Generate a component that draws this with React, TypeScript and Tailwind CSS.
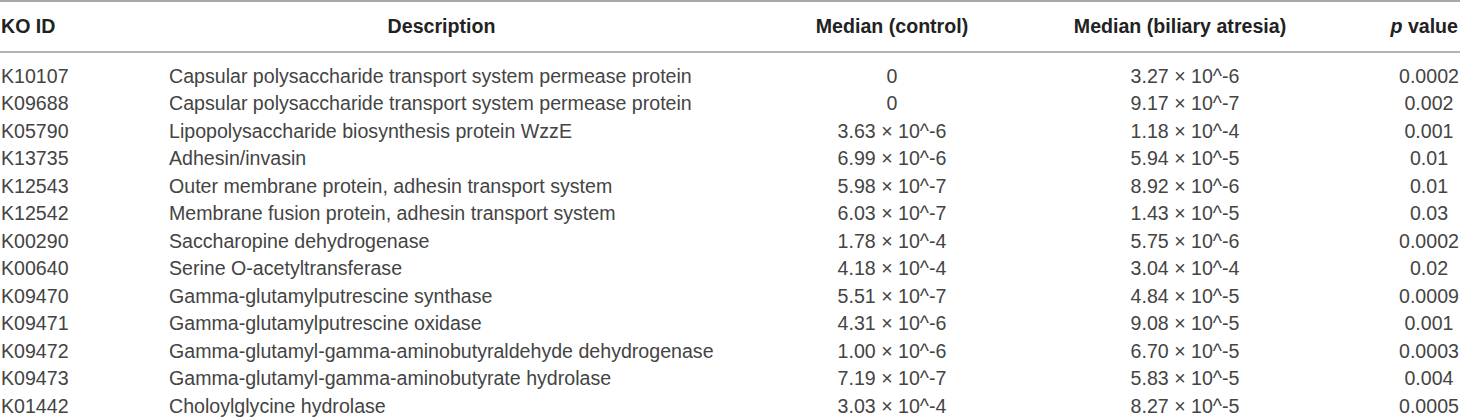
import React from "react";

type Fila = {
  ko: string;
  descripcion: string;
  control: string;
  biliar: string;
  p: string;
};

const filas: Fila[] = [
  { ko: "K10107", descripcion: "Capsular polysaccharide transport system permease protein", control: "0", biliar: "3.27 × 10^-6", p: "0.0002" },
  { ko: "K09688", descripcion: "Capsular polysaccharide transport system permease protein", control: "0", biliar: "9.17 × 10^-7", p: "0.002" },
  { ko: "K05790", descripcion: "Lipopolysaccharide biosynthesis protein WzzE", control: "3.63 × 10^-6", biliar: "1.18 × 10^-4", p: "0.001" },
  { ko: "K13735", descripcion: "Adhesin/invasin", control: "6.99 × 10^-6", biliar: "5.94 × 10^-5", p: "0.01" },
  { ko: "K12543", descripcion: "Outer membrane protein, adhesin transport system", control: "5.98 × 10^-7", biliar: "8.92 × 10^-6", p: "0.01" },
  { ko: "K12542", descripcion: "Membrane fusion protein, adhesin transport system", control: "6.03 × 10^-7", biliar: "1.43 × 10^-5", p: "0.03" },
  { ko: "K00290", descripcion: "Saccharopine dehydrogenase", control: "1.78 × 10^-4", biliar: "5.75 × 10^-6", p: "0.0002" },
  { ko: "K00640", descripcion: "Serine O-acetyltransferase", control: "4.18 × 10^-4", biliar: "3.04 × 10^-4", p: "0.02" },
  { ko: "K09470", descripcion: "Gamma-glutamylputrescine synthase", control: "5.51 × 10^-7", biliar: "4.84 × 10^-5", p: "0.0009" },
  { ko: "K09471", descripcion: "Gamma-glutamylputrescine oxidase", control: "4.31 × 10^-6", biliar: "9.08 × 10^-5", p: "0.001" },
  { ko: "K09472", descripcion: "Gamma-glutamyl-gamma-aminobutyraldehyde dehydrogenase", control: "1.00 × 10^-6", biliar: "6.70 × 10^-5", p: "0.0003" },
  { ko: "K09473", descripcion: "Gamma-glutamyl-gamma-aminobutyrate hydrolase", control: "7.19 × 10^-7", biliar: "5.83 × 10^-5", p: "0.004" },
  { ko: "K01442", descripcion: "Choloylglycine hydrolase", control: "3.03 × 10^-4", biliar: "8.27 × 10^-5", p: "0.0005" },
];

const columnas = "grid grid-cols-[169px_545px_356px_220px_1fr]";

const App = () => {
  return (
    <div className="w-[1460px] h-[417px] bg-white overflow-hidden font-['Liberation_Sans',Arial,sans-serif] text-[19.6px] leading-[27.5px]">
      <div className="border-t-2 border-[#a8a8a8]">
        {/* encabezado */}
        <div className={`${columnas} pt-[11px] pb-[10px] border-b-2 border-[#b4b4b4] font-bold text-[#222]`}>
          <div className="pl-[1px]">KO ID</div>
          <div className="text-center">Description</div>
          <div className="text-center">Median (control)</div>
          <div className="text-center">Median (biliary atresia)</div>
          <div className="text-right pr-[2px]">
            <span className="italic">p</span> value
          </div>
        </div>

        {/* filas */}
        <div className="pt-[10px] text-[#444]">
          {filas.map((fila) => (
            <div key={fila.ko + fila.p} className={columnas}>
              <div className="pl-[1px]">{fila.ko}</div>
              <div>{fila.descripcion}</div>
              <div className="text-center">{fila.control}</div>
              <div className="text-center pl-[10px]">{fila.biliar}</div>
              <div className="text-center pl-[108px]">{fila.p}</div>
            </div>
          ))}
        </div>
      </div>
    </div>
  );
};

export default App;
